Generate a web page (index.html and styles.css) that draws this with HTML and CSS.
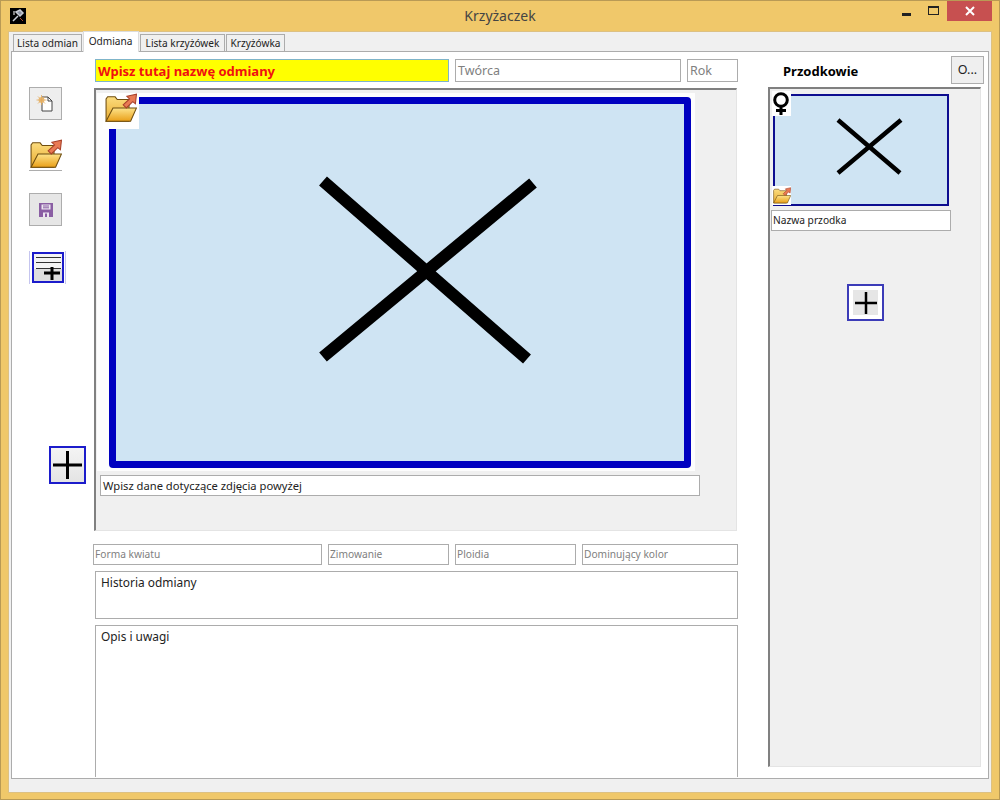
FILE: index.html
```html
<!DOCTYPE html>
<html lang="pl">
<head>
    <meta charset="UTF-8">
    <title>Krzyżaczek</title>
    <link rel="stylesheet" href="styles.css">
</head>
<body>
    <svg class="defs" aria-hidden="true">
        <defs>
            <linearGradient id="folderBack" x1="0" y1="0" x2="0" y2="1">
                <stop offset="0" stop-color="#fbdc7e"/>
                <stop offset="1" stop-color="#e9ab2e"/>
            </linearGradient>
            <linearGradient id="folderFront" x1="0" y1="0" x2="0" y2="1">
                <stop offset="0" stop-color="#fde38a"/>
                <stop offset="1" stop-color="#e99f17"/>
            </linearGradient>
            <symbol id="folder" viewBox="0 0 30 28">
                <path d="M1 26.500V5.500L2.500 3.500h7l2 2.500h11v20.500z" fill="url(#folderBack)" stroke="#6f4e10"/>
                <path d="M1 26.500L7.500 14H29.500L24 26.500z" fill="url(#folderFront)" stroke="#6f4e10"/>
                <path d="M17 11L23 5.500L20.500 3L29.500 1L28.500 10L26 8L20 14z" fill="#e97a54" stroke="#a8402a"/>
            </symbol>
        </defs>
    </svg>

    <div class="window">
        <header class="titlebar">
            <div class="titlebar-left">
                <svg class="app-icon" viewBox="0 0 16 16">
                    <rect width="16" height="16" fill="#000"/>
                    <path d="M3 13L8 8M6 4l4 4 3-3-3-3z" stroke="#c8ccd4" stroke-width="1.500" fill="#8d93a3"/>
                    <path d="M10 10l3 3" stroke="#b05030" stroke-width="1"/>
                    <path d="M3 6h2M4 3v2" stroke="#fff" stroke-width="1"/>
                </svg>
            </div>
            <div class="title">Krzyżaczek</div>
            <div class="win-controls">
                <span class="win-btn"><i class="min-glyph"></i></span>
                <span class="win-btn"><i class="max-glyph"></i></span>
                <span class="win-btn close">
                    <svg viewBox="0 0 10 10" width="10" height="10"><path d="M1 1l8 8M9 1l-8 8" stroke="#fff" stroke-width="2"/></svg>
                </span>
            </div>
        </header>

        <div class="client">
            <nav class="tabs">
                <div class="tab tab-w69">Lista odmian</div>
                <div class="tab active">Odmiana</div>
                <div class="tab tab-w85">Lista krzyżówek</div>
                <div class="tab tab-w59">Krzyżówka</div>
            </nav>

            <main class="panel">
                <aside class="tools">
                    <button class="tool">
                        <svg viewBox="0 0 20 20" width="20" height="20">
                            <path d="M6 3h6l4 4v10H6z" fill="#fff" stroke="#444"/>
                            <path d="M12 3v4h4" fill="none" stroke="#444"/>
                            <circle cx="5.500" cy="6" r="3" fill="#e9bd7c"/>
                            <path d="M5.500 1v10M.5 6h10M2 2.500l7 7M9 2.500l-7 7" stroke="#e2a95a" stroke-width=".8"/>
                        </svg>
                    </button>
                    <button class="tool tool-plain">
                        <svg width="32" height="30"><use href="#folder"/></svg>
                    </button>
                    <button class="tool tool-save">
                        <svg viewBox="0 0 16 16" width="16" height="16">
                            <path d="M1 1h14v14H1z" fill="#8a5ea3"/>
                            <path d="M3.500 2.500h9v5h-9z" fill="#ece6f0"/>
                            <path d="M5 4h6M5 5.800h6" stroke="#8a5ea3"/>
                            <path d="M5 10.500h6V15H5z" fill="#ece6f0"/>
                            <path d="M7 11.500h2V15H7z" fill="#8a5ea3"/>
                        </svg>
                    </button>
                    <button class="tool-add-list">
                        <span class="add-list-inner">
                            <svg viewBox="0 0 28 27" width="28" height="27">
                                <path d="M2 3.500h25M2 8.500h25M2 14.500h25" stroke="#333" stroke-width="1"/>
                                <path d="M10 19h16M18 13v13" stroke="#000" stroke-width="3"/>
                            </svg>
                        </span>
                    </button>
                    <button class="tool-add-big">
                        <svg viewBox="0 0 33 34" width="33" height="34">
                            <path d="M2 17h29M16.500 3v28" stroke="#000" stroke-width="3"/>
                        </svg>
                    </button>
                </aside>

                <section class="center">
                    <div class="top-row">
                        <div class="field name-field">Wpisz tutaj nazwę odmiany</div>
                        <div class="field hint author-field">Twórca</div>
                        <div class="field hint year-field">Rok</div>
                    </div>

                    <div class="photo-panel">
                        <div class="photo">
                            <div class="photo-inner">
                                <svg class="cross" viewBox="0 0 582 371">
                                    <path d="M214 84L418 262M424 86L214 260" stroke="#000" stroke-width="12"/>
                                </svg>
                            </div>
                            <span class="photo-open">
                                <svg width="32" height="30"><use href="#folder"/></svg>
                            </span>
                        </div>
                        <div class="field caption">Wpisz dane dotyczące zdjęcia powyżej</div>
                    </div>

                    <div class="details">
                        <div class="field hint small d-form">Forma kwiatu</div>
                        <div class="field hint small d-winter">Zimowanie</div>
                        <div class="field hint small d-ploidy">Ploidia</div>
                        <div class="field hint small d-color">Dominujący kolor</div>
                    </div>
                    <div class="memo memo-history">Historia odmiany</div>
                    <div class="memo memo-notes">Opis i uwagi</div>
                </section>

                <section class="ancestors">
                    <div class="ancestors-head">
                        <h2>Przodkowie</h2>
                        <button class="more">O...</button>
                    </div>
                    <div class="ancestors-panel">
                        <div class="thumb">
                            <svg class="cross" viewBox="0 0 172 108">
                                <path d="M63 24L125 77M126 24L63 77" stroke="#000" stroke-width="4.500"/>
                            </svg>
                            <span class="thumb-sex">
                                <svg viewBox="0 0 19 24" width="19" height="24">
                                    <circle cx="9" cy="9" r="6.300" fill="none" stroke="#000" stroke-width="3"/>
                                    <path d="M9 15v9M4 19.500h10" stroke="#000" stroke-width="3"/>
                                </svg>
                            </span>
                            <span class="thumb-open">
                                <svg width="18" height="17"><use href="#folder"/></svg>
                            </span>
                        </div>
                        <div class="field thumb-name">Nazwa przodka</div>
                        <button class="add-ancestor">
                            <svg viewBox="0 0 24 24" width="24" height="24">
                                <path d="M1 12h22M12 1v22" stroke="#000" stroke-width="2.500"/>
                            </svg>
                        </button>
                    </div>
                </section>
            </main>
        </div>
    </div>
</body>
</html>
```

FILE: styles.css
```css
* {
    box-sizing: border-box;
}
body {
    margin: 0;
    font-family: "Noto Sans", "Open Sans", sans-serif;
    font-size: 11px;
    color: #000;
}
button {
    padding: 0;
    font: inherit;
    display: flex;
    align-items: center;
    justify-content: center;
}
.defs {
    position: absolute;
    width: 0;
    height: 0;
}

/* window frame */
.window {
    width: 1000px;
    height: 800px;
    background-color: #f0c86a;
    border: 1px solid #b99a55;
    padding: 0 7px 6px;
}
.titlebar {
    height: 30px;
    display: grid;
    grid-template-columns: 1fr auto 1fr;
    align-items: center;
}
.titlebar-left {
    padding-left: 2px;
    padding-bottom: 1px;
}
.app-icon {
    display: block;
    width: 16px;
    height: 16px;
}
.title {
    font-size: 14px;
    color: #444;
    padding-bottom: 2px;
}
.win-controls {
    display: flex;
    justify-content: flex-end;
    align-self: start;
}
.win-btn {
    width: 27px;
    height: 20px;
    display: flex;
    align-items: center;
    justify-content: center;
}
.win-btn.close {
    width: 45px;
    background-color: #c75050;
}
.min-glyph {
    width: 9px;
    height: 3px;
    background-color: #222;
    margin-top: 6px;
}
.max-glyph {
    width: 11px;
    height: 9px;
    border: 1px solid #222;
    border-top-width: 2px;
    margin-top: -2px;
}

/* client area */
.client {
    height: 762px;
    background-color: #f0f0f0;
    border: 1px solid #ddc183;
    padding: 0 2px 13px;
    display: flex;
    flex-direction: column;
}
.tabs {
    display: flex;
    height: 19px;
    padding-left: 2px;
    position: relative;
    z-index: 1;
    align-items: flex-end;
}
.tab {
    height: 17px;
    line-height: 16px;
    font-size: 10.1px;
    text-align: center;
    white-space: nowrap;
    background-color: #f0f0f0;
    border: 1px solid #acacac;
    border-bottom: none;
    color: #222;
    margin-right: 1px;
}
.tab-w69 { width: 69px; }
.tab-w85 { width: 85px; }
.tab-w59 { width: 59px; }
.tab.active {
    width: 56px;
    height: 21px;
    line-height: 18px;
    margin-bottom: -1px;
    background-color: #fff;
    border-color: #dcdcdc;
    padding-right: 1px;
}
.panel {
    flex: 1;
    background-color: #fff;
    border: 1px solid #acacac;
    display: grid;
    grid-template-columns: 82px 674px 1fr;
    min-height: 0;
}
.field {
    background-color: #fff;
    border: 1px solid #acacac;
    display: flex;
    align-items: center;
    padding-left: 2px;
    height: 21px;
    white-space: nowrap;
}
.hint {
    color: #808080;
    font-size: 12.5px;
}
.hint.small {
    font-size: 10.2px;
    padding: 0 0 1px 1px;
}

/* left toolbar */
.tools {
    padding: 35px 0 0 17px;
    display: flex;
    flex-direction: column;
}
.tool {
    width: 33px;
    height: 33px;
    background-color: #eee;
    border: 1px solid #adadad;
    margin-bottom: 18px;
}
.tool-plain {
    background-color: #fff;
    border-width: 0 0 1px;
    margin-bottom: 22px;
}
.tool-save {
    margin-bottom: 25px;
    background-color: #e6e6e6;
}
.tool-add-list {
    width: 37px;
    height: 33px;
    background-color: #fff;
    border: solid #c5c5ef;
    border-width: 0 1px;
    padding: 0 2px;
    margin-bottom: 162px;
}
.add-list-inner {
    display: block;
    width: 32px;
    height: 31px;
    border: 2px solid #1c1ccb;
    background: linear-gradient(#f4f4f4, #f4f4f4 55%, #dfdfdf 55%);
}
.add-list-inner svg {
    display: block;
}
.tool-add-big {
    width: 37px;
    height: 38px;
    margin-left: 20px;
    background: linear-gradient(#f4f4f4, #e4e4e4);
    border: 2px solid #1c1ccb;
}

/* center column */
.center {
    width: 644px;
    padding-top: 7px;
}
.top-row {
    display: flex;
    gap: 6px;
    height: 23px;
    margin-left: 1px;
}
.top-row .field {
    height: 23px;
}
.name-field {
    width: 354px;
    background-color: #ffff00;
    border-color: #7fb4c9;
    color: #f01010;
    font-size: 13px;
    font-weight: bold;
}
.author-field { width: 226px; }
.year-field { width: 51px; }

.photo-panel {
    width: 643px;
    height: 443px;
    margin-top: 6px;
    background-color: #f0f0f0;
    border-style: solid;
    border-color: #808080 #e4e4e4 #e4e4e4 #808080;
    border-width: 2px 1px 1px 2px;
    padding: 3px 0 0 1px;
}
.photo {
    width: 598px;
    height: 378px;
    background-color: #fdfdfd;
    padding: 4px 4px 3px 12px;
    position: relative;
}
.photo-inner {
    height: 100%;
    background-color: #cfe4f3;
    border: 7px solid #0000c0;
    border-radius: 4px;
}
.photo-inner .cross {
    margin: -7px;
    width: 582px;
    height: 371px;
}
.cross {
    display: block;
}
.photo-open {
    position: absolute;
    left: 6px;
    top: 0;
    width: 36px;
    height: 36px;
    background-color: #fff;
    display: flex;
    align-items: flex-start;
    justify-content: center;
}
.caption {
    width: 600px;
    margin: 4px 0 0 3px;
    font-size: 11.2px;
    color: #222;
}
.details {
    display: flex;
    gap: 6px;
    margin-top: 13px;
    margin-left: -1px;
}
.d-form { width: 229px; }
.d-winter { width: 121px; }
.d-ploidy { width: 121px; }
.d-color { width: 156px; }
.memo {
    margin: 6px 0 0 1px;
    width: 643px;
    background-color: #fff;
    border: 1px solid #acacac;
    padding: 2px 5px;
    font-size: 11.9px;
    color: #222;
}
.memo-history { height: 48px; }
.memo-notes {
    height: 152px;
    border-bottom: none;
}

/* ancestors column */
.ancestors {
    padding-top: 3px;
    display: flex;
    flex-direction: column;
    min-height: 0;
}
.ancestors-head {
    display: flex;
    align-items: center;
    height: 29px;
    padding: 0 4px 0 15px;
}
.ancestors-head h2 {
    margin: 3px 0 0;
    font-size: 13px;
    font-weight: bold;
}
.more {
    margin-left: auto;
    width: 33px;
    height: 28px;
    background-color: #efefef;
    border: 1px solid #adadad;
    color: #222;
    font-size: 12.5px;
}
.ancestors-panel {
    height: 680px;
    margin: 3px 7px 0 0;
    background-color: #f0f0f0;
    border-style: solid;
    border-color: #808080 #e4e4e4 #e4e4e4 #808080;
    border-width: 2px 1px 1px 2px;
    padding: 5px 0 0 1px;
}
.thumb {
    width: 176px;
    height: 112px;
    background-color: #cfe4f3;
    border: 2px solid #0d0d90;
    position: relative;
    margin-left: 2px;
}
.thumb .cross {
    width: 172px;
    height: 108px;
}
.thumb-sex {
    position: absolute;
    left: -3px;
    top: -5px;
    width: 19px;
    height: 25px;
    background-color: #fff;
    display: flex;
    justify-content: center;
}
.thumb-open {
    position: absolute;
    left: -3px;
    bottom: -1px;
    width: 19px;
    height: 19px;
    background-color: #fff;
    display: flex;
    align-items: center;
    justify-content: center;
}
.thumb-name {
    width: 180px;
    margin-top: 4px;
    padding: 0 0 1px 1px;
    font-size: 10.2px;
    color: #222;
}
.add-ancestor {
    width: 37px;
    height: 37px;
    margin: 53px 0 0 76px;
    background: linear-gradient(#e6e6e6, #e6e6e6) center / 25px 25px no-repeat #fff;
    border: 2px solid #3c3cb8;
}
```
